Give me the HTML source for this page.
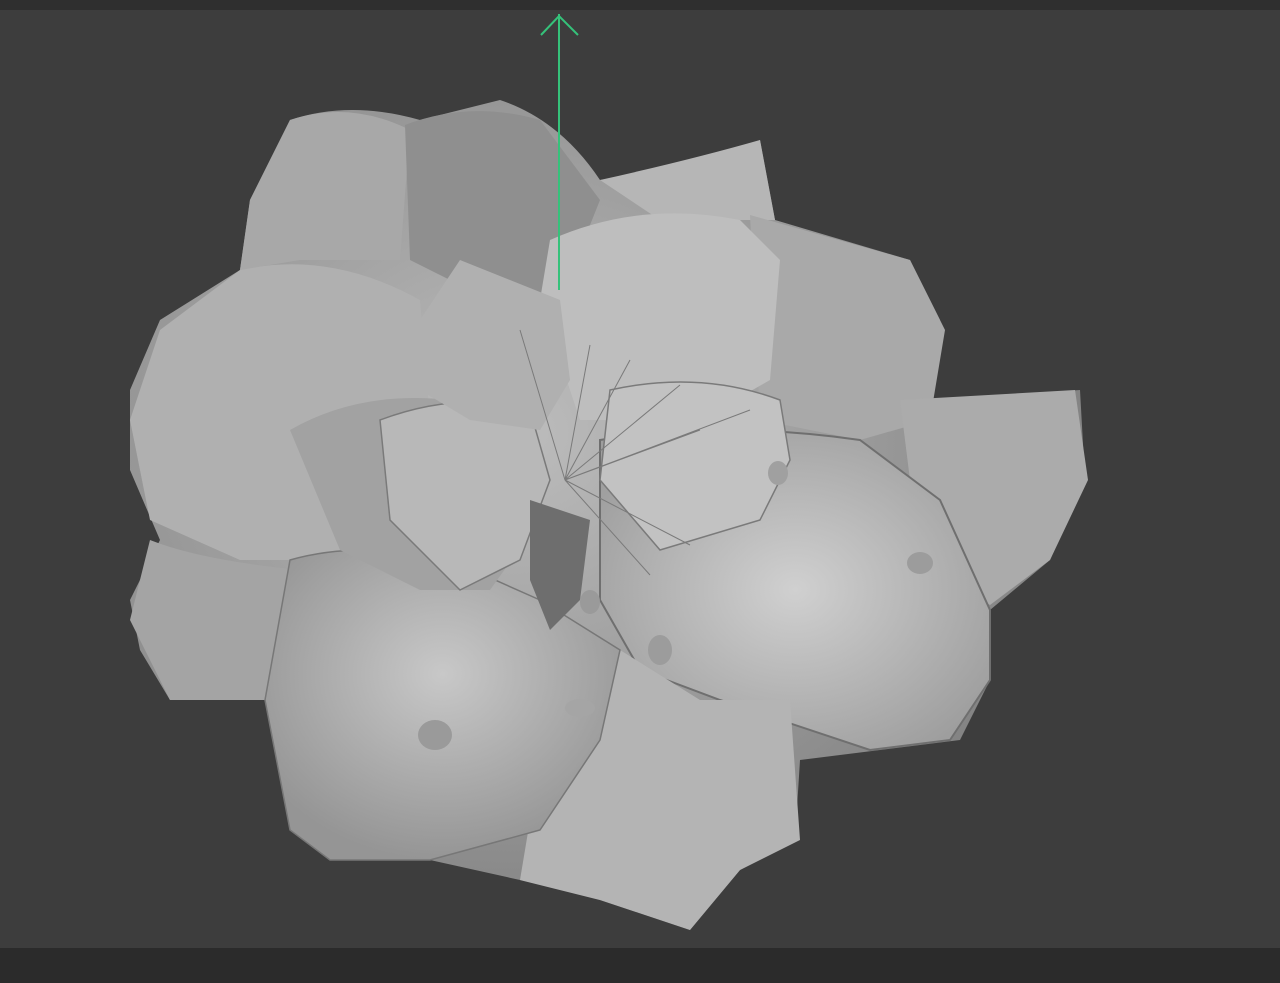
<!DOCTYPE html>
<html><head><style>
html,body{margin:0;padding:0;width:1280px;height:983px;overflow:hidden;background:#3d3d3d;}
svg{position:absolute;left:0;top:0}
</style></head><body>
<svg width="1280" height="983" viewBox="0 0 1280 983">
<defs>
<radialGradient id="g1" cx="50%" cy="40%" r="60%"><stop offset="0" stop-color="#c8c8c8"/><stop offset="1" stop-color="#959595"/></radialGradient>
<radialGradient id="g2" cx="40%" cy="40%" r="70%"><stop offset="0" stop-color="#bdbdbd"/><stop offset="1" stop-color="#7a7a7a"/></radialGradient>
<radialGradient id="g3" cx="50%" cy="50%" r="60%"><stop offset="0" stop-color="#d0d0d0"/><stop offset="1" stop-color="#9e9e9e"/></radialGradient>
</defs>
<rect x="0" y="0" width="1280" height="10" fill="#2f2f2f"/>
<rect x="0" y="948" width="1280" height="35" fill="#2b2b2b"/>
<path d="M290 120 Q350 100 420 120 L500 100 Q560 120 600 180 L700 170 L760 140 L775 220 L910 260 L940 320 L930 400 L1080 390 L1085 480 L1050 560 L990 610 L990 680 L960 740 L880 750 L800 760 L795 840 L740 870 L690 930 L600 900 L520 880 L430 860 L330 860 L290 830 L270 700 L170 700 L140 650 L130 600 L160 540 L130 470 L130 390 L160 320 L240 270 L250 200 Z" fill="url(#g2)"/>
<path d="M240 270 Q330 250 420 300 L430 420 L360 560 L240 560 L150 520 L130 420 L160 330 Z" fill="#b0b0b0"/>
<path d="M150 540 Q200 560 300 570 L290 700 L170 700 L130 620 Z" fill="#a4a4a4"/>
<path d="M290 120 Q350 100 410 130 L400 260 L300 260 L240 270 L250 200 Z" fill="#a8a8a8"/>
<path d="M405 125 Q470 100 540 120 L600 200 L560 300 L470 290 L410 260 Z" fill="#8f8f8f"/>
<path d="M600 180 Q690 160 760 140 L775 220 L660 220 Z" fill="#b6b6b6"/>
<path d="M750 215 L910 260 L945 330 L930 420 L860 440 L760 420 Z" fill="#a9a9a9"/>
<path d="M900 400 L1075 390 L1088 480 L1050 560 L990 605 L920 560 Z" fill="#ababab"/>
<path d="M550 240 Q640 200 740 220 L780 260 L770 380 L700 420 L580 420 L540 300 Z" fill="#bebebe"/>
<path d="M600 440 Q720 420 860 440 L940 500 L990 610 L990 680 L950 740 L870 750 L720 700 L640 670 L600 600 Z" fill="url(#g3)" stroke="#6f6f6f" stroke-width="2"/>
<path d="M520 640 L620 650 L700 700 L790 700 L800 840 L740 870 L690 930 L600 900 L520 880 L540 760 Z" fill="#b4b4b4"/>
<path d="M290 560 Q360 540 450 560 L540 600 L620 650 L600 740 L540 830 L430 860 L330 860 L290 830 L265 700 Z" fill="url(#g1)" stroke="#777" stroke-width="1.5"/>
<path d="M290 430 Q360 390 450 400 L520 430 L540 520 L490 590 L420 590 L340 550 Z" fill="#a2a2a2"/>
<path d="M380 420 Q460 390 530 410 L550 480 L520 560 L460 590 L390 520 Z" fill="#b8b8b8" stroke="#7a7a7a" stroke-width="1.5"/>
<path d="M420 320 L460 260 L510 280 L560 300 L570 380 L540 430 L470 420 L420 390 Z" fill="#b0b0b0"/>
<path d="M610 390 Q700 370 780 400 L790 460 L760 520 L660 550 L600 480 Z" fill="#c2c2c2" stroke="#7a7a7a" stroke-width="1.5"/>
<path d="M530 500 L590 520 L580 600 L550 630 L530 580 Z" fill="#6e6e6e"/>
<ellipse cx="435" cy="735" rx="17" ry="15" fill="#9a9a9a"/>
<ellipse cx="580" cy="708" rx="15" ry="9" fill="#a5a5a5"/>
<ellipse cx="660" cy="650" rx="12" ry="15" fill="#9c9c9c"/>
<ellipse cx="920" cy="563" rx="13" ry="11" fill="#9c9c9c"/>
<ellipse cx="778" cy="473" rx="10" ry="12" fill="#a0a0a0"/>
<ellipse cx="590" cy="602" rx="10" ry="12" fill="#9a9a9a"/>
<g stroke="#7a7a7a" stroke-width="1" fill="none">
<path d="M565 480 L520 330 M565 480 L590 345 M565 480 L630 360 M565 480 L680 385 M565 480 L700 430 M565 480 L750 410 M565 480 L690 545 M565 480 L650 575"/>
</g>
<rect x="558" y="14" width="2" height="276" fill="#35c27a"/>
<path d="M541 35 L559 16 L578 35" stroke="#35c27a" stroke-width="2" fill="none"/>
</svg>
</body></html>
